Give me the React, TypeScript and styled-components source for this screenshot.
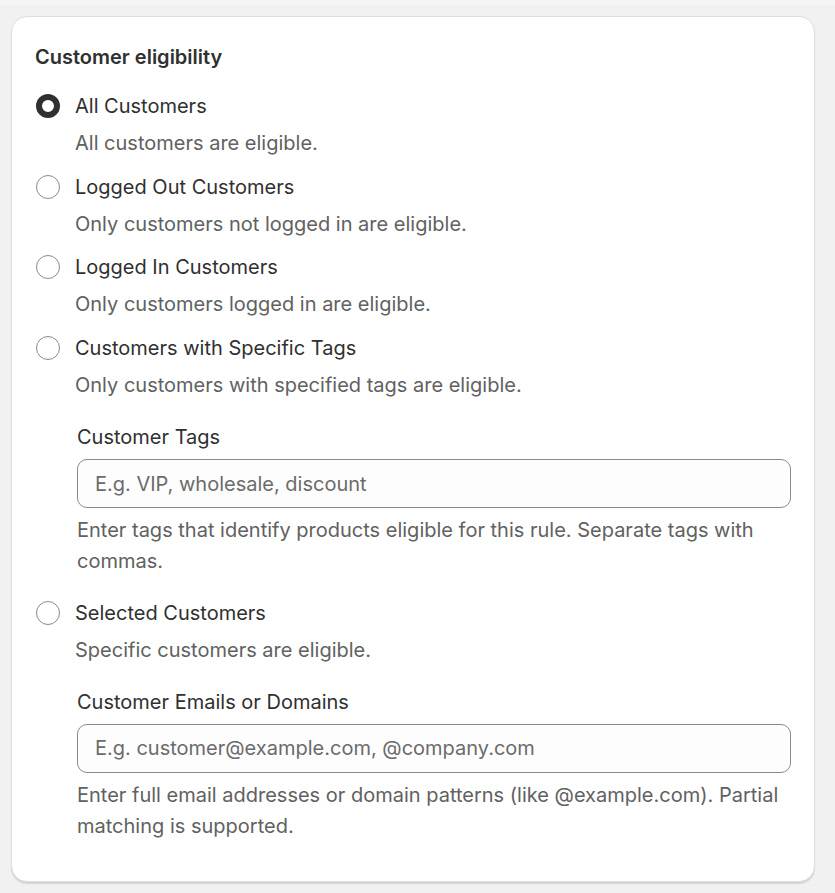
import styled, { createGlobalStyle } from 'styled-components';

const GlobalStyle = createGlobalStyle`
  html, body {
    margin: 0;
    padding: 0;
    background: #f1f1f2;
  }
  body {
    font-family: Inter, 'Noto Sans', sans-serif;
    -webkit-font-smoothing: antialiased;
  }
`;

const Page = styled.div`
  min-height: 893px;
  box-sizing: border-box;
  background: #f1f1f2;
`;

const TopStrip = styled.div`
  height: 5px;
  background: #f5f5f6;
`;

const Body = styled.div`
  padding: 11px 20px 12px 11px;
`;

const Card = styled.section`
  background: #fff;
  border: 1px solid #dedede;
  border-radius: 16px;
  box-shadow: 0 2px 1px rgba(0, 0, 0, 0.12);
  padding: 26px 23px 33px 23px;
  color: #303030;
`;

const Heading = styled.h2`
  margin: 0;
  font-size: 20px;
  line-height: 28px;
  font-weight: 600;
  color: #303030;
`;

const OptionList = styled.div`
  display: flex;
  flex-direction: column;
  gap: 15.7px;
  margin-top: 21px;
`;

const Option = styled.div`
  display: flex;
  flex-direction: column;
`;

const OptionRow = styled.label`
  display: flex;
  align-items: center;
  gap: 15px;
  height: 28px;
  padding-left: 1px;
  cursor: pointer;
`;

const Radio = styled.span<{ $checked?: boolean }>`
  width: 24px;
  height: 24px;
  box-sizing: border-box;
  border-radius: 50%;
  flex-shrink: 0;
  background: #fff;
  border: ${(p) => (p.$checked ? '6.5px solid #303030' : '1px solid #8a8a8a')};
`;

const OptionLabel = styled.span`
  font-size: 20px;
  line-height: 28px;
  color: #303030;
`;

const OptionDesc = styled.div`
  margin-top: 9px;
  padding-left: 40px;
  font-size: 20px;
  line-height: 28px;
  color: #616161;
`;

const Field = styled.div`
  display: flex;
  flex-direction: column;
  padding: 0 0 6px 42px;
  margin-top: 24px;
`;

const FieldLabel = styled.label`
  font-size: 20px;
  line-height: 28px;
  color: #303030;
`;

const Input = styled.input`
  margin-top: 8px;
  height: 49px;
  box-sizing: border-box;
  width: 100%;
  border: 1px solid #8a8a8a;
  border-radius: 10px;
  background: #fdfdfd;
  padding: 0 17px;
  font-family: Inter, 'Noto Sans', sans-serif;
  font-size: 20px;
  color: #303030;
  outline: none;
  &::placeholder {
    color: #6b6b6b;
  }
`;

const HelpText = styled.div`
  margin-top: 7px;
  font-size: 20px;
  line-height: 31px;
  color: #616161;
`;

type Choice = {
  label: string;
  desc: string;
  checked?: boolean;
  field?: { label: string; placeholder: string; help: string };
};

const choices: Choice[] = [
  { label: 'All Customers', desc: 'All customers are eligible.', checked: true },
  { label: 'Logged Out Customers', desc: 'Only customers not logged in are eligible.' },
  { label: 'Logged In Customers', desc: 'Only customers logged in are eligible.' },
  {
    label: 'Customers with Specific Tags',
    desc: 'Only customers with specified tags are eligible.',
    field: {
      label: 'Customer Tags',
      placeholder: 'E.g. VIP, wholesale, discount',
      help: 'Enter tags that identify products eligible for this rule. Separate tags with commas.',
    },
  },
  {
    label: 'Selected Customers',
    desc: 'Specific customers are eligible.',
    field: {
      label: 'Customer Emails or Domains',
      placeholder: 'E.g. customer@example.com, @company.com',
      help: 'Enter full email addresses or domain patterns (like @example.com). Partial matching is supported.',
    },
  },
];

export default function App() {
  return (
    <Page>
      <GlobalStyle />
      <TopStrip />
      <Body>
        <Card>
          <Heading>Customer eligibility</Heading>
          <OptionList>
            {choices.map((c) => (
              <Option key={c.label}>
                <OptionRow>
                  <Radio $checked={c.checked} />
                  <OptionLabel>{c.label}</OptionLabel>
                </OptionRow>
                <OptionDesc>{c.desc}</OptionDesc>
                {c.field && (
                  <Field>
                    <FieldLabel>{c.field.label}</FieldLabel>
                    <Input placeholder={c.field.placeholder} />
                    <HelpText>{c.field.help}</HelpText>
                  </Field>
                )}
              </Option>
            ))}
          </OptionList>
        </Card>
      </Body>
    </Page>
  );
}
